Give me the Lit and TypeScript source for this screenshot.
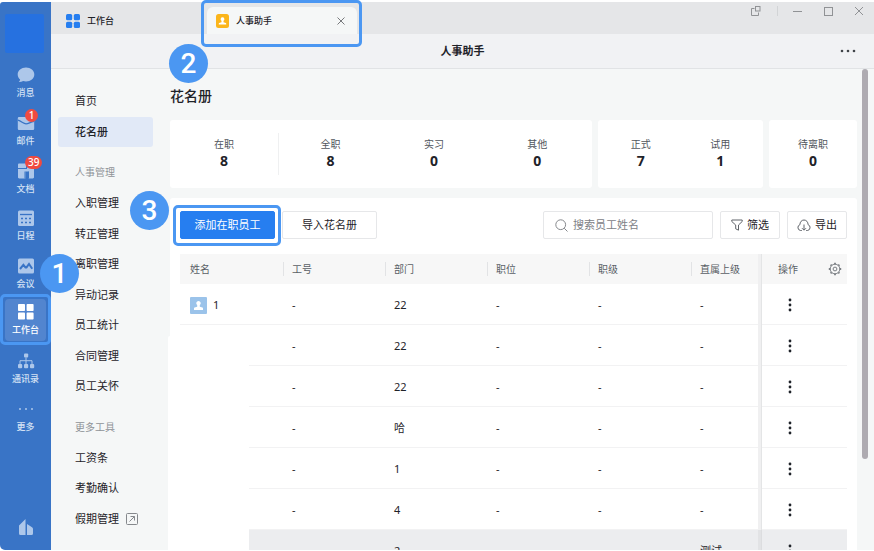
import { LitElement, html, css, svg, nothing } from "lit";
import { customElement } from "lit/decorators.js";
import { classMap } from "lit/directives/class-map.js";

const railIcons: Record<string, unknown> = {
  message: svg`<path d="M9 1.500c4.700 0 8.300 3 8.300 7s-3.600 7-8.300 7c-1 0-2-.1-2.900-.4-1.200.8-2.700 1.100-4.300 1 .9-.8 1.300-1.700 1.300-2.600C1.600 12.200.7 10.500.7 8.500c0-4 3.600-7 8.300-7z"/>`,
  mail: svg`<path d="M2 3h14a1.200 1.200 0 0 1 1.200 1.200v10.600A1.200 1.200 0 0 1 16 16H2a1.200 1.200 0 0 1-1.200-1.200V4.200A1.200 1.200 0 0 1 2 3z"/><path d="M1 6.200c3.500 1 5.500 3.600 8 3.600s4-1.600 8-2.400" fill="none" stroke="#3974c6" stroke-width="1.300"/>`,
  docs: svg`<path d="M2.200 1.500H9v4.600H1V2.700c0-.7.500-1.200 1.200-1.200zM1 6h7.500v10.500H2.200c-.7 0-1.200-.5-1.200-1.200zM10.500 5H17v10.300c0 .7-.5 1.200-1.200 1.200h-4.300V9.500H8V6h2.500z"/><path d="M1 6.500h9M8 9.500v7M11.500 9.500v7" stroke="#3974c6" fill="none"/>`,
  calendar: svg`<rect x="1" y="1.500" width="16" height="15.500" rx="1.500"/><g stroke="#3974c6" stroke-width="1.300" fill="none"><path d="M3 5.500h12"/><path d="M4 9.500h2M8 9.500h2M12 9.500h2M4 13.500h2M8 13.500h2M12 13.500h2"/></g>`,
  meeting: svg`<rect x="1" y="1.500" width="16" height="15" rx="1.500"/><path d="M3 12l3.400-4.200L9 11.200M9 11.200l3-4.200 3.200 4.800" fill="none" stroke="#3974c6" stroke-width="2"/>`,
  work: svg`<g fill="#fff"><rect x="1" y="1" width="7" height="7" rx=".8"/><rect x="9.600" y="1" width="7" height="7" rx=".8"/><rect x="1" y="9.600" width="7" height="7" rx=".8"/><rect x="9.600" y="9.600" width="7" height="7" rx=".8"/></g>`,
  contacts: svg`<rect x="7" y="1.500" width="4.200" height="4" rx="1"/><rect x="1" y="12" width="4.200" height="4.200" rx="1"/><rect x="7" y="12" width="4.200" height="4.200" rx="1"/><rect x="13" y="12" width="4.200" height="4.200" rx="1"/><path d="M9 5.500V12M3 12V8.700h12V12" fill="none" stroke="#adc7ea"/>`,
  more: svg`<circle cx="3" cy="9" r="1"/><circle cx="9" cy="9" r="1"/><circle cx="15" cy="9" r="1"/>`,
};

const railItems = [
  { icon: "message", label: "消息" },
  { icon: "mail", label: "邮件", badge: "1" },
  { icon: "docs", label: "文档", badge: "39" },
  { icon: "calendar", label: "日程" },
  { icon: "meeting", label: "会议" },
  { icon: "work", label: "工作台", active: true },
  { icon: "contacts", label: "通讯录" },
  { icon: "more", label: "更多" },
];

const base = css`
  :host { box-sizing: border-box; }
  *, *::before, *::after { box-sizing: border-box; }
  button {
    font: inherit; color: inherit; background: none; border: 0;
    padding: 0; margin: 0; display: flex; align-items: center; justify-content: center;
  }
  svg { display: block; flex: none; }
  .step {
    position: absolute; width: 39px; height: 39px; border-radius: 50%;
    background: #4b97f2; color: #fff; display: flex; align-items: center;
    justify-content: center; font: 500 28px/39px Roboto, "Liberation Sans", sans-serif; z-index: 3;
  }
  .ring {
    position: absolute; border: 3px solid #4b97f2; border-radius: 5px;
    pointer-events: none; z-index: 2;
  }
`;

@customElement("side-rail")
class SideRail extends LitElement {
  static styles = [base, css`
    :host {
      display: flex; flex-direction: column; width: 51px; flex: none; background: #3974c6;
      padding: 12px 0 14px; position: relative; z-index: 2; border-radius: 3px 0 0 5px;
    }
    .avatar { width: 39px; height: 39px; margin-left: 5px; border-radius: 2px; background: #2671e0; flex: none; }
    .items { flex: 1; display: grid; grid-auto-rows: 1fr; margin: 6px 0 78px; padding: 0; list-style: none; }
    li { position: relative; display: flex; }
    .item { flex: 1; flex-direction: column; gap: 3px; font-size: 9px; line-height: 12px; color: #d3e1f4; position: relative; font-weight: 500; }
    .item.active { color: #fff; background: #5285cf; margin: 2px 5px 4px; border-radius: 4px; }
    .badge {
      position: absolute; left: 25px; top: 2px; min-width: 13px; height: 13px; padding: 0 3px;
      border-radius: 7px; background: #f04a40; color: #fff; font-size: 10px; line-height: 13px; text-align: center;
    }
    .ring { inset: -3px 0 0; }
    .step { left: 40px; top: -43px; }
    .brand { align-self: center; }
    .icon { fill: #adc7ea; }
  `];
  render() {
    return html`
      <div class="avatar"></div>
      <ul class="items">
        ${railItems.map((i) => html`<li>
          <button class=${classMap({ item: true, active: !!i.active })}>
            <svg class="icon" width="18" height="18" viewBox="0 0 18 18">${railIcons[i.icon]}</svg>
            <span>${i.label}</span>
            ${i.badge ? html`<span class="badge">${i.badge}</span>` : nothing}
          </button>
          ${i.active ? html`<span class="ring"></span><span class="step">1</span>` : nothing}
        </li>`)}
      </ul>
      <svg class="brand icon" width="16" height="18" viewBox="0 0 16 18">
        <path d="M1 7.500L7.500 1v16H2.500A1.500 1.500 0 0 1 1 15.500zM9 6l5 3.200c.7.500 1 1 1 1.800v4.500a1.500 1.500 0 0 1-1.500 1.500H9z"/>
      </svg>`;
  }
}

@customElement("tab-strip")
class TabStrip extends LitElement {
  static styles = [base, css`
    :host { display: flex; height: 32px; background: #e5e6e8; font-size: 9px; line-height: 14px; color: #1f2329; font-weight: 500; position: relative; z-index: 1; }
    .tab { width: 156px; padding: 5px 0 0 15px; gap: 7px; justify-content: flex-start; }
    .active { position: relative; display: flex; align-items: center; gap: 7px; width: 150px; margin-top: 5px; padding: 0 9px; background: #f5f7f7; border-radius: 6px 6px 0 0; }
    .name { flex: 1; justify-content: flex-start; gap: 7px; }
    .ring { inset: -7px -5px -13px -6px; }
    .step { left: -38px; top: 37px; }
    .controls { margin-left: auto; display: flex; height: 17px; align-items: center; }
    .controls button { width: 31px; height: 17px; }
    .split { width: 1px; height: 10px; background: #d2d4d6; margin: 0 3px 0 6px; }
  `];
  render() {
    return html`
      <button class="tab">
        <svg width="14" height="14" viewBox="0 0 14 14" fill="#267ef0"><rect width="6.200" height="6.200" rx="1.500"/><rect x="7.800" width="6.200" height="6.200" rx="1.500"/><rect y="7.800" width="6.200" height="6.200" rx="1.500"/><rect x="7.800" y="7.800" width="6.200" height="6.200" rx="1.500"/></svg>
        工作台
      </button>
      <div class="active">
        <button class="name">
          <svg width="13" height="14" viewBox="0 0 13 14"><rect width="13" height="14" rx="2.500" fill="#fbb51b"/><path d="M6.500 3.300a1.900 1.900 0 0 1 1 3.500v1.400l2.300.9c.3.100.4.300.4.600v.8H2.800v-.8c0-.3.100-.5.400-.6l2.300-.9V6.800a1.900 1.900 0 0 1 1-3.500z" fill="#fff"/></svg>
          人事助手
        </button>
        <button aria-label="关闭标签">
          <svg width="14" height="14" viewBox="0 0 14 14" stroke="#77797c" fill="none"><path d="M3.500 3.500l7 7M10.500 3.500l-7 7"/></svg>
        </button>
        <span class="ring"></span><span class="step">2</span>
      </div>
      <div class="controls">
        <button aria-label="弹出"><svg width="10" height="10" viewBox="0 0 10 10" stroke="#909295" fill="none"><path d="M3.500 2.500h-3v7h7v-3"/><rect x="4.500" y=".5" width="4.500" height="4.500"/></svg></button>
        <span class="split"></span>
        <button aria-label="最小化"><svg width="10" height="10" viewBox="0 0 10 10" stroke="#909295"><path d="M1 5.500h9"/></svg></button>
        <button aria-label="最大化"><svg width="10" height="10" viewBox="0 0 10 10" stroke="#909295" fill="none"><rect x="1.500" y="1.500" width="8" height="8"/></svg></button>
        <button aria-label="关闭"><svg width="10" height="10" viewBox="0 0 10 10" stroke="#909295" fill="none"><path d="M1 1l8 8M9 1L1 9"/></svg></button>
      </div>`;
  }
}

const menu = [
  { items: ["首页", "花名册"] },
  { title: "人事管理", items: ["入职管理", "转正管理", "离职管理", "异动记录", "员工统计", "合同管理", "员工关怀"] },
  { title: "更多工具", items: ["工资条", "考勤确认", "假期管理"] },
];

@customElement("side-menu")
class SideMenu extends LitElement {
  static styles = [base, css`
    :host { display: flex; width: 119px; flex: none; padding: 17px 17px 16px 7px; font-size: 11px; line-height: 16px; color: #1f2329; }
    nav { flex: 1; display: flex; flex-direction: column; }
    a, .title { flex: 1; display: flex; align-items: center; gap: 7px; padding-left: 17px; border-radius: 3px; color: inherit; text-decoration: none; white-space: nowrap; }
    .title { color: #8f9397; font-size: 10px; margin-top: 10px; }
    .current { background: #e1e9f7; font-weight: 500; }
  `];
  render() {
    return html`<nav>
      ${menu.map((g) => html`
        ${g.title ? html`<div class="title">${g.title}</div>` : nothing}
        ${g.items.map((t) => html`<a href="#" class=${classMap({ current: t === "花名册" })}>${t}${t === "假期管理"
          ? html`<svg width="12" height="12" viewBox="0 0 12 12" fill="none" stroke="#85888c"><rect x=".5" y=".5" width="11" height="11" rx="1"/><path d="M3.500 8.500l5-5M4.500 3.500h4v4"/></svg>` : nothing}</a>`)}
      `)}
    </nav>`;
  }
}

const cards = [
  { cls: "wide", stats: [["在职", "8"], ["全职", "8"], ["实习", "0"], ["其他", "0"]] },
  { cls: "", stats: [["正式", "7"], ["试用", "1"]] },
  { cls: "", stats: [["待离职", "0"]] },
];

const rows = [
  ["1", "-", "22", "-", "-", "-"],
  ["", "-", "22", "-", "-", "-"],
  ["", "-", "22", "-", "-", "-"],
  ["", "-", "哈", "-", "-", "-"],
  ["", "-", "1", "-", "-", "-"],
  ["", "-", "4", "-", "-", "-"],
  ["", "", "2", "", "", "测试"],
];

@customElement("staff-roster")
class StaffRoster extends LitElement {
  static styles = [base, css`
    :host { display: flex; flex-direction: column; flex: 1; min-width: 0; padding-top: 15px; color: #1f2329; font-size: 11px; line-height: 16px; }
    h1 { margin: 0 0 12px; font-size: 14px; line-height: 24px; font-weight: 500; }
    .cards { display: grid; grid-template-columns: 422fr 165fr 88fr; gap: 6px; margin-bottom: 10px; }
    .card { display: flex; background: #fff; border-radius: 3px; height: 68px; padding: 13px 3px; }
    .card.wide { padding-left: 0; }
    .stat { flex: 1; text-align: center; padding-top: 3px; height: 42px; }
    .wide .stat:first-child { flex: 0 0 26%; border-right: 1px solid #eff0f1; }
    .label { font-size: 10px; color: #51565d; }
    .value { font-size: 14px; line-height: 18px; font-weight: 700; }
    .panel { position: relative; flex: 1; min-height: 0; background: #fff; padding: 13px 10px 0; border-radius: 3px 3px 0 0; }
    .tools { display: flex; gap: 7px; margin-bottom: 15px; }
    .tools button, .search { height: 28px; border: 1px solid #e6e7e9; border-radius: 2px; background: #fff; white-space: nowrap; }
    .wrap { position: relative; }
    .tools .big { width: 95px; }
    .tools .primary { background: #267ef0; border-color: #267ef0; color: #fff; }
    .tools .small { width: 60px; gap: 4px; }
    .ring { inset: -6px -6px -7px -7px; }
    .step { left: -50px; top: -20px; }
    .search { display: flex; align-items: center; gap: 5px; width: 170px; padding-left: 11px; margin-left: auto; }
    input { flex: 1; min-width: 0; border: 0; outline: 0; padding: 0; font: inherit; background: none; }
    input::placeholder { color: #7d8186; opacity: 1; }
    table { width: 100%; table-layout: fixed; border-collapse: separate; border-spacing: 0; }
    .c-lead { width: 72px; }
    .c-op { width: 85px; }
    th { height: 30px; padding: 0 0 0 10px; background: #f7f7f7; font-size: 10px; font-weight: 400; text-align: left; color: #5a5f66; position: relative; white-space: nowrap; }
    th.sep::before { content: ""; position: absolute; left: 1px; top: 8px; height: 14px; width: 1px; background: #e2e3e5; }
    td { height: 41px; padding: 2px 0 0 10px; border-bottom: 1px solid #f2f2f3; position: relative; }
    .op { padding-left: 16px; }
    .op::after { content: ""; position: absolute; left: -4px; top: 0; bottom: -1px; width: 4px; background: #f0f0f1; border-right: 1px solid #e4e5e6; }
    tr.hover td { background: #ecedef; }
    tr.hover .op::after { background: #e2e3e5; border-color: #dcdddf; }
    .person { display: flex; align-items: center; gap: 6px; }
    .ophead { display: flex; align-items: center; justify-content: space-between; padding-right: 5px; }
    .kebab { width: 24px; height: 24px; }
    .blank { position: absolute; left: -2px; top: 138px; bottom: 0; width: 81px; background: #fff; z-index: 1; border-radius: 2px 0 0 0; }
  `];
  render() {
    return html`
      <h1>花名册</h1>
      <div class="cards">
        ${cards.map((c) => html`<div class="card ${c.cls}">
          ${c.stats.map(([l, v]) => html`<div class="stat"><div class="label">${l}</div><div class="value">${v}</div></div>`)}
        </div>`)}
      </div>
      <div class="panel">
        <div class="tools">
          <div class="wrap"><button class="big primary">添加在职员工</button><span class="ring"></span><span class="step">3</span></div>
          <button class="big">导入花名册</button>
          <label class="search" aria-label="搜索员工姓名">
            <svg width="13" height="13" viewBox="0 0 13 13" fill="none" stroke="#85888c"><circle cx="5.700" cy="5.700" r="4.900"/><path d="M9.200 9.200l3.300 3.300"/></svg>
            <input type="text" placeholder="搜索员工姓名" />
          </label>
          <button class="small">
            <svg width="12" height="12" viewBox="0 0 12 12" fill="none" stroke="#5f6369"><path d="M.8 1h10.400v1.500L7.500 6v5.200L4.700 9.800V6L.8 2.500z" stroke-linejoin="round"/></svg>筛选
          </button>
          <button class="small">
            <svg width="14" height="13" viewBox="0 0 14 13" fill="none" stroke="#5f6369"><path d="M4.800 11.500H3.600A3 3 0 0 1 2.900 5.700C2.900 3 4.700 1 7 1s4.100 2 4.100 4.700a3 3 0 0 1-.7 5.800H9.200"/><path d="M7 5.500v5.500M5 9.200l2 2 2-2"/></svg>导出
          </button>
        </div>
        <table>
          <colgroup><col /><col /><col /><col /><col /><col class="c-lead" /><col class="c-op" /></colgroup>
          <thead><tr>
            <th>姓名</th>
            ${["工号", "部门", "职位", "职级", "直属上级"].map((h) => html`<th class="sep">${h}</th>`)}
            <th class="op"><div class="ophead">操作
              <button aria-label="设置"><svg width="14" height="14" viewBox="0 0 14 14" fill="none" stroke="#7b7f84"><circle cx="7" cy="7" r="4.800"/><circle cx="7" cy="7" r="1.900"/><path stroke-width="1.800" d="M7 2.200V.8M7 11.800v1.400M2.200 7H.8M11.800 7h1.400M3.600 3.600l-1-1M10.400 3.600l1-1M3.600 10.400l-1 1M10.400 10.400l1 1"/></svg></button></div></th>
          </tr></thead>
          <tbody>
            ${rows.map((r, n) => html`<tr class=${classMap({ hover: n === rows.length - 1 })}>
              <td>${r[0] ? html`<div class="person">
                <svg width="17" height="17" viewBox="0 0 17 17"><rect width="17" height="17" rx="1" fill="#9bc3ea"/><path d="M8.500 4a2.200 2.200 0 0 1 1.300 4v1.700l2.600.9c.4.200.6.400.6.800V13H4v-1.600c0-.4.200-.6.600-.8l2.600-.9V8a2.200 2.200 0 0 1 1.300-4z" fill="#fff"/></svg>${r[0]}</div>` : nothing}</td>
              ${r.slice(1).map((c) => html`<td>${c}</td>`)}
              <td class="op"><button class="kebab" aria-label="更多操作"><svg width="4" height="14" viewBox="0 0 4 14" fill="#1f2329"><circle cx="2" cy="2" r="1.400"/><circle cx="2" cy="7" r="1.400"/><circle cx="2" cy="12" r="1.400"/></svg></button></td>
            </tr>`)}
          </tbody>
        </table>
        <div class="blank"></div>
      </div>`;
  }
}

@customElement("app-root")
class AppRoot extends LitElement {
  static styles = [base, css`
    :host {
      display: flex; height: 100vh; padding: 2px 0 1px; background: #fff; overflow: hidden;
      font-family: "Noto Sans", "Noto Sans CJK SC", sans-serif;
    }
    .window { flex: 1; min-width: 0; display: flex; flex-direction: column; }
    header { display: flex; align-items: center; height: 35px; flex: none; background: #f1f2f4; border-bottom: 1px solid #e1e3e5; color: #1f2329; }
    .title { flex: 1; text-align: center; font-size: 11px; line-height: 16px; font-weight: 700; padding-left: 42px; }
    .more { width: 24px; height: 24px; margin: 0 14px 0 4px; flex: none; }
    .body { flex: 1; min-height: 0; display: flex; background: #f5f7f7; overflow: hidden; }
    .track { width: 17px; flex: none; padding-left: 5px; }
    .thumb { width: 6px; height: 81%; border-radius: 3px; background: #aeabb1; }
  `];
  render() {
    return html`
      <side-rail></side-rail>
      <div class="window">
        <tab-strip></tab-strip>
        <header>
          <div class="title">人事助手</div>
          <button class="more" aria-label="更多"><svg width="16" height="4" viewBox="0 0 16 4" fill="#3f4348"><circle cx="2" cy="2" r="1.300"/><circle cx="8" cy="2" r="1.300"/><circle cx="14" cy="2" r="1.300"/></svg></button>
        </header>
        <div class="body">
          <side-menu></side-menu>
          <staff-roster></staff-roster>
          <div class="track"><div class="thumb"></div></div>
        </div>
      </div>`;
  }
}
